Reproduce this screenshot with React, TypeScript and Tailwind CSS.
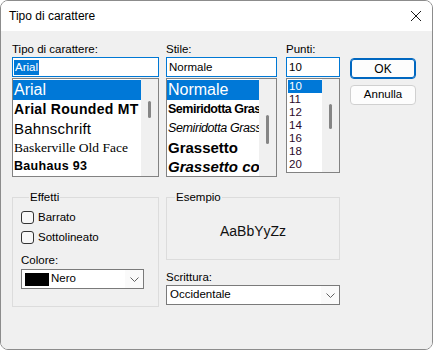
import React from 'react'

type Item = { label: string; className?: string }

const fontItems: Item[] = [
  { label: 'Arial', className: 'text-[16px]' },
  { label: 'Arial Rounded MT', className: 'text-[14px] font-bold tracking-[0.3px]' },
  { label: 'Bahnschrift', className: 'text-[15px] tracking-[0.2px]' },
  { label: 'Baskerville Old Face', className: "text-[13.5px] font-['Liberation_Serif',serif]" },
  { label: 'Bauhaus 93', className: 'text-[12.5px] font-black tracking-[0.3px]' },
]

const styleItems: Item[] = [
  { label: 'Normale', className: 'text-[16px]' },
  { label: 'Semiridotta Grassetto', className: 'text-[12.5px] font-bold tracking-[-0.5px]' },
  { label: 'Semiridotta Grassetto', className: 'text-[12.5px] italic tracking-[-0.4px]' },
  { label: 'Grassetto', className: 'text-[15px] font-bold' },
  { label: 'Grassetto corsivo', className: 'text-[15px] font-bold italic' },
]

const sizes = ['10', '11', '12', '14', '16', '18', '20']

const sans = "font-['Segoe_UI','Liberation_Sans',sans-serif]"

function Scrollbar({ top, height }: { top: number; height: number }) {
  return (
    <div className="w-[17px] shrink-0 bg-[#f0f0f0] flex justify-center">
      <div className="w-[3px] rounded-full bg-[#858585]" style={{ marginTop: top, height }} />
    </div>
  )
}

function Label({ children }: { children: React.ReactNode }) {
  return <div className="h-[14px] text-[11.5px] leading-[14px] text-black mb-[1px]">{children}</div>
}

function Field({ value, selected }: { value: string; selected?: boolean }) {
  return (
    <div className="h-[20px] border border-[#0078d4] bg-white flex items-center px-[1px] mb-[1px]">
      <span
        className={
          selected
            ? 'bg-[#0078d7] text-white text-[11.5px] leading-[15px] px-[1px]'
            : 'text-black text-[11.5px] leading-[15px] px-[1px]'
        }
      >
        {value}
      </span>
    </div>
  )
}

function Select({ width, children }: { width: string; children: React.ReactNode }) {
  return (
    <div className={`${width} h-[20px] border border-[#7a7a7a] bg-white flex items-center`}>
      <div className="flex-1 flex items-center gap-[2px] pl-[3px] text-[11.5px] text-black">{children}</div>
      <div className="w-[18px] h-full bg-[#fafafa] flex items-center justify-center">
        <svg width="9" height="5" viewBox="0 0 9 5" fill="none">
          <path d="M0.5 0.5 L4.5 4.5 L8.5 0.5" stroke="#606060" strokeWidth="1" />
        </svg>
      </div>
    </div>
  )
}

function Checkbox({ label }: { label: string }) {
  return (
    <div className="flex items-center gap-[4px] h-[13px]">
      <div className="w-[13px] h-[13px] rounded-[3px] border border-[#333] bg-[#f7f7f7]" />
      <span className="text-[11.5px] leading-[13px] text-black">{label}</span>
    </div>
  )
}

export default function App() {
  return (
    <div className={`w-[433px] h-[351px] bg-white ${sans}`}>
      <div className="w-[433px] h-[350px] rounded-[8px] border border-[#8c8c8c] overflow-hidden flex flex-col">
        <div className="h-[30px] bg-white flex items-center justify-between pl-[8px] pr-[10px] shrink-0">
          <span className="text-[12px] text-black">Tipo di carattere</span>
          <svg width="12" height="12" viewBox="0 0 12 12">
            <path d="M1 1 L11 11 M11 1 L1 11" stroke="#1a1a1a" strokeWidth="1" />
          </svg>
        </div>
        <div className="flex-1 bg-[#f0f0f0] pl-[11px] pt-[11px]">
          <div className="flex">
            <div className="w-[147px]">
              <Label>Tipo di carattere:</Label>
              <Field value="Arial" selected />
              <div className="h-[99px] border border-[#828282] bg-white flex overflow-hidden mt-[1px]">
                <div className="flex-1 pt-[1px] overflow-hidden">
                  {fontItems.map((it, i) => (
                    <div
                      key={i}
                      className={`h-[19px] leading-[19px] whitespace-nowrap pl-[1px] font-['Liberation_Sans',sans-serif] ${it.className} ${
                        i === 0 ? 'bg-[#0078d7] text-white h-[20px]' : 'text-black'
                      }`}
                    >
                      {it.label}
                    </div>
                  ))}
                </div>
                <Scrollbar top={22} height={17} />
              </div>
            </div>

            <div className="w-[111px] ml-[7px]">
              <Label>Stile:</Label>
              <Field value="Normale" />
              <div className="h-[99px] border border-[#828282] bg-white flex overflow-hidden mt-[1px]">
                <div className="flex-1 pt-[1px] overflow-hidden">
                  {styleItems.map((it, i) => (
                    <div
                      key={i}
                      className={`h-[19px] leading-[19px] whitespace-nowrap pl-[1px] font-['Liberation_Sans',sans-serif] ${it.className} ${
                        i === 0 ? 'bg-[#0078d7] text-white h-[20px]' : 'text-black'
                      }`}
                    >
                      {it.label}
                    </div>
                  ))}
                </div>
                <Scrollbar top={36} height={29} />
              </div>
            </div>

            <div className="w-[54px] ml-[9px]">
              <Label>Punti:</Label>
              <Field value="10" />
              <div className="h-[95px] border border-[#828282] bg-white flex overflow-hidden mt-[1px]">
                <div className="flex-1 pt-[1px] pl-[1px] overflow-hidden">
                  {sizes.map((s, i) => (
                    <div
                      key={s}
                      className={`h-[13px] leading-[13px] text-[11.5px] pl-[1px] font-['Liberation_Sans',sans-serif] ${
                        i === 0 ? 'bg-[#0078d7] text-white' : 'text-[#2a0a2a]'
                      }`}
                    >
                      {s}
                    </div>
                  ))}
                </div>
                <Scrollbar top={25} height={25} />
              </div>
            </div>

            <div className="w-[66px] ml-[10px] pt-[16px] flex flex-col gap-[6px]">
              <button className="h-[21px] rounded-[4px] border border-[#0067c0] bg-[#fdfdfd] text-[12px] text-black shadow-[inset_0_0_0_1px_#0067c0]">
                OK
              </button>
              <button className="h-[20px] rounded-[4px] border border-[#d0d0d0] bg-[#fdfdfd] text-[11.5px] text-black">
                Annulla
              </button>
            </div>
          </div>

          <div className="flex mt-[13px]">
            <fieldset className="w-[147px] h-[117px] border border-[#dcdcdc] pl-[8px]">
              <legend className="ml-[8px] px-[1px] text-[11.5px] leading-[14px] text-black">Effetti</legend>
              <div className="flex flex-col gap-[7px] mt-[7px]">
                <Checkbox label="Barrato" />
                <Checkbox label="Sottolineato" />
              </div>
              <div className="mt-[9px] text-[11.5px] leading-[14px] text-black">Colore:</div>
              <div className="mt-[2px]">
                <Select width="w-[123px]">
                  <div className="w-[24px] h-[13px] bg-black" />
                  <span>Nero</span>
                </Select>
              </div>
            </fieldset>

            <div className="w-[174px] ml-[7px]">
              <fieldset className="h-[70px] border border-[#dcdcdc] flex items-center justify-center">
                <legend className="ml-[8px] px-[1px] text-[11.5px] leading-[14px] text-black">Esempio</legend>
                <div className="text-[14px] text-[#111] font-['Liberation_Sans',sans-serif]">AaBbYyZz</div>
              </fieldset>
              <div className="mt-[10px]">
                <Label>Scrittura:</Label>
              </div>
              <div className="mt-[1px]">
                <Select width="w-[174px]">
                  <span>Occidentale</span>
                </Select>
              </div>
            </div>
          </div>
        </div>
      </div>
    </div>
  )
}
